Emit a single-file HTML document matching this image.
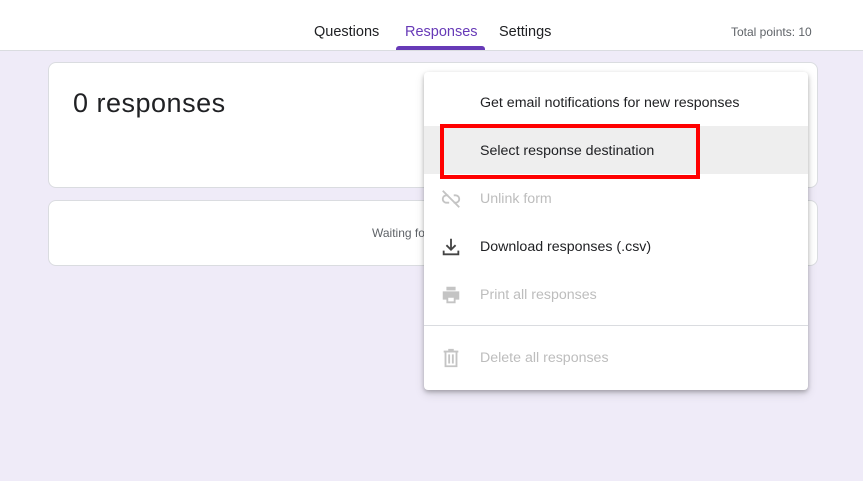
<!DOCTYPE html>
<html><head><style>
body{margin:0;width:863px;height:481px;background:#efebf8;font-family:"Liberation Sans",Arial,sans-serif;position:relative;overflow:hidden}
.hdr{position:absolute;left:0;top:0;width:863px;height:50px;background:#fff;border-bottom:1px solid #dadce0}
.tab{position:absolute;top:24px;font-size:14.5px;color:#202124}
.card{position:absolute;left:48px;width:768px;background:#fff;border:1px solid #dadce0;border-radius:8px}
.menu{position:absolute;left:424px;top:72px;width:384px;height:318px;background:#fff;border-radius:4px;box-shadow:0 2px 4px rgba(0,0,0,.25),0 4px 10px rgba(0,0,0,.12)}
.it{position:absolute;left:0;width:384px;height:48px;font-size:14.2px;color:#202124}
.it span{position:absolute;left:56px;top:17px}
.it.d{color:#bdbdbd}
.it svg{position:absolute;left:16px;top:14px}
</style></head><body>
<div class="hdr">
<div class="tab" style="left:314px">Questions</div>
<div class="tab" style="left:405px;color:#673ab7">Responses</div>
<div style="position:absolute;left:396px;top:46px;width:89px;height:4px;background:#673ab7;border-radius:3px 3px 0 0"></div>
<div class="tab" style="left:499px">Settings</div>
<div style="position:absolute;left:731px;top:25px;font-size:12px;color:#5f6368">Total points: 10</div>
</div>
<div class="card" style="top:62px;height:124px"><div style="position:absolute;left:24px;top:25px;font-size:27px;letter-spacing:0.5px;color:#202124">0 responses</div></div>
<div class="card" style="top:200px;height:64px"><div style="position:absolute;left:323px;top:25px;font-size:12px;color:#5f6368">Waiting fo</div></div>
<div class="menu">
<div class="it" style="top:6px"><span>Get email notifications for new responses</span></div>
<div class="it" style="top:54px;background:#eeeeee"><span>Select response destination</span></div>
<div class="it d" style="top:102px"><svg width="22" height="22" viewBox="0 0 24 24" fill="none" stroke="#c4c4c4" stroke-width="2"><path d="M9 8H7a4 4 0 0 0 0 8h3M15 8h2a4 4 0 0 1 0 8h-2M3 3l18 18"/></svg><span>Unlink form</span></div>
<div class="it" style="top:150px"><svg width="22" height="22" viewBox="0 0 24 24" fill="none" stroke="#444" stroke-width="2"><path d="M12 3v12M7 10l5 5 5-5M4 16v4h16v-4"/></svg><span>Download responses (.csv)</span></div>
<div class="it d" style="top:198px"><svg width="22" height="22" viewBox="0 0 24 24" fill="#c4c4c4"><path d="M7 3h10v4H7zM3 8h18v9h-4v4H7v-4H3zM9 15v4h6v-4z"/></svg><span>Print all responses</span></div>
<div style="position:absolute;left:0;top:253px;width:384px;height:1px;background:#dadce0"></div>
<div class="it d" style="top:261px"><svg width="22" height="22" viewBox="0 0 24 24" fill="none" stroke="#c4c4c4" stroke-width="2"><path d="M6 5h12v16H6zM4 5h16M9 3h6M10 8v10M14 8v10"/></svg><span>Delete all responses</span></div>
</div>
<div style="position:absolute;left:440px;top:124px;width:252px;height:47px;border:4px solid #f00"></div>
</body></html>
